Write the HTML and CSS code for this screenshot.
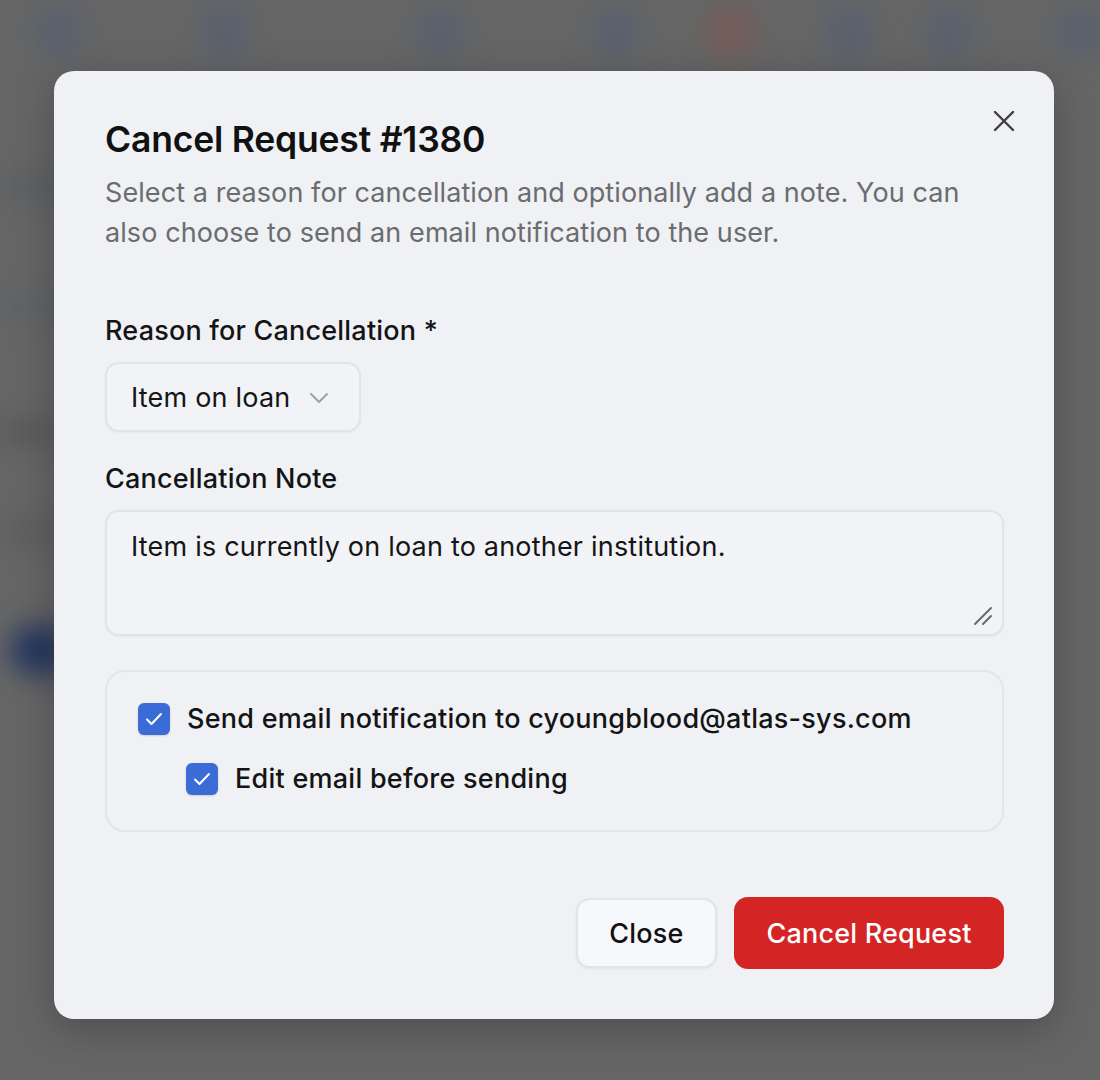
FILE: index.html
```html
<!DOCTYPE html>
<html lang="en">
<head>
<meta charset="utf-8">
<title>Cancel Request</title>
<link rel="stylesheet" href="styles.css">
</head>
<body>
<div class="backdrop" aria-hidden="true">
  <div class="blob b1"></div>
  <div class="blob b2"></div>
  <div class="blob b3"></div>
  <div class="blob b4"></div>
  <div class="blob b5 red"></div>
  <div class="blob b6"></div>
  <div class="blob b7"></div>
  <div class="blob b8"></div>
  <div class="blob navy"></div>
  <div class="line l1"></div>
  <div class="line l2"></div>
  <div class="line l3"></div>
  <div class="line l4"></div>
</div>
<div class="overlay">
  <div class="modal" role="dialog">
    <button class="close-x" aria-label="Close">
      <svg width="22" height="22" viewBox="0 0 22 22"><path d="M2 2 L20 20 M20 2 L2 20" stroke="#3f3f3f" stroke-width="2.4" stroke-linecap="round"/></svg>
    </button>
    <h1 class="title">Cancel Request #1380</h1>
    <p class="desc">Select a reason for cancellation and optionally add a note. You can also choose to send an email notification to the user.</p>

    <label class="label label-first">Reason for Cancellation *</label>
    <div class="select">
      <span>Item on loan</span>
      <svg class="chev" width="20" height="12" viewBox="0 0 20 12"><path d="M2 2 L10 10 L18 2" fill="none" stroke="#a0a0a0" stroke-width="2" stroke-linecap="round" stroke-linejoin="round"/></svg>
    </div>

    <label class="label label-second">Cancellation Note</label>
    <div class="textarea">
      <span>Item is currently on loan to another institution.</span>
      <svg class="resize" width="20" height="20" viewBox="0 0 20 20"><path d="M18 2 L2 18 M18 10 L10 18" stroke="#6a6a6a" stroke-width="2" stroke-linecap="round"/></svg>
    </div>

    <div class="panel">
      <div class="check-row">
        <span class="box"><svg width="18" height="14" viewBox="0 0 18 14"><path d="M2 7.5 L6.5 12 L16 2" fill="none" stroke="#fff" stroke-width="2" stroke-linecap="round" stroke-linejoin="round"/></svg></span>
        <span>Send email notification to cyoungblood@atlas-sys.com</span>
      </div>
      <div class="check-row sub">
        <span class="box"><svg width="18" height="14" viewBox="0 0 18 14"><path d="M2 7.5 L6.5 12 L16 2" fill="none" stroke="#fff" stroke-width="2" stroke-linecap="round" stroke-linejoin="round"/></svg></span>
        <span>Edit email before sending</span>
      </div>
    </div>

    <div class="actions">
      <button class="btn btn-secondary">Close</button>
      <button class="btn btn-danger">Cancel Request</button>
    </div>
  </div>
</div>
</body>
</html>
```
FILE: styles.css
```css
* { box-sizing: border-box; }
html, body { margin: 0; padding: 0; }
body {
  width: 1100px;
  height: 1080px;
  background: #666666;
  font-family: Inter, "Noto Sans", "Liberation Sans", sans-serif;
  overflow: hidden;
  position: relative;
}
.backdrop {
  position: absolute;
  inset: 0;
  filter: blur(14px);
  overflow: hidden;
}
.blob {
  position: absolute;
  top: 10px;
  width: 40px;
  height: 44px;
  border-radius: 10px;
  background: #566070;
}
.b1 { left: 38px; }
.b2 { left: 205px; }
.b3 { left: 420px; }
.b4 { left: 595px; }
.b5 { left: 710px; }
.b6 { left: 830px; }
.b7 { left: 930px; }
.b8 { left: 1060px; }
.red { background: #7a5a58; }
.navy {
  top: 625px;
  left: 10px;
  width: 60px;
  height: 50px;
  border-radius: 25px;
  background: #23355f;
}
.line {
  position: absolute;
  left: 0;
  width: 60px;
  height: 14px;
  background: #555a60;
}
.l1 { top: 180px; }
.l2 { top: 300px; background: #5a6068; }
.l3 { top: 425px; background: #505050; }
.l4 { top: 525px; background: #585858; }

.overlay {
  position: relative;
  display: flex;
  justify-content: center;
  padding: 71px 0 0 8px;
}
.modal {
  position: relative;
  width: 1000px;
  height: 948px;
  background: #eff1f4;
  border-radius: 20px;
  padding: 48px 50px 50px 51px;
  box-shadow: 0 10px 40px rgba(0,0,0,0.25);
  display: flex;
  flex-direction: column;
}
.close-x {
  position: absolute;
  right: 39px;
  top: 39px;
  width: 22px;
  height: 22px;
  padding: 0;
  border: 0;
  background: transparent;
  display: flex;
}
.title {
  margin: 0;
  font-size: 35.5px;
  line-height: 42px;
  font-weight: 600;
  color: #111111;
  letter-spacing: -0.2px;
}
.desc {
  margin: 12px 0 0;
  font-size: 27px;
  line-height: 40px;
  color: #6b6c6e;
  font-weight: 400;
  letter-spacing: 0.08px;
}
.label {
  display: block;
  font-size: 27px;
  line-height: 36px;
  color: #141414;
  font-weight: 500;
  letter-spacing: 0.2px;
}
.label-first { margin-top: 60px; }
.label-second { margin-top: 29px; }
.select {
  margin-top: 13px;
  width: 256px;
  height: 70px;
  border: 2px solid #e2e3e6;
  border-radius: 14px;
  background: #f1f3f6;
  display: flex;
  align-items: center;
  justify-content: space-between;
  padding: 0 30px 0 24px;
  font-size: 27px;
  letter-spacing: 0.2px;
  color: #151515;
  box-shadow: 0 1px 2px rgba(0,0,0,0.04);
}
.chev { margin-top: 2px; }
.textarea {
  position: relative;
  margin-top: 13px;
  height: 126px;
  border: 2px solid #e2e3e6;
  border-radius: 14px;
  background: #f1f3f6;
  padding: 17px 24px;
  font-size: 27px;
  letter-spacing: 0.2px;
  line-height: 36px;
  color: #151515;
  box-shadow: 0 1px 2px rgba(0,0,0,0.04);
}
.resize {
  position: absolute;
  right: 9px;
  bottom: 8px;
}
.panel {
  margin-top: 34px;
  height: 162px;
  border: 2px solid #e4e5e8;
  border-radius: 20px;
  padding: 31px 31px 0;
  display: flex;
  flex-direction: column;
  gap: 28px;
}
.check-row {
  display: flex;
  align-items: center;
  gap: 17px;
  font-size: 27px;
  letter-spacing: 0.25px;
  line-height: 32px;
  color: #141414;
  font-weight: 500;
}
.check-row.sub { padding-left: 48px; }
.box {
  width: 32px;
  height: 32px;
  border-radius: 6px;
  background: #3b6bd7;
  display: flex;
  align-items: center;
  justify-content: center;
  flex: none;
  box-shadow: 0 1px 2px rgba(0,0,0,0.15);
}
.actions {
  margin-top: 65px;
  display: flex;
  justify-content: flex-end;
  align-items: center;
  gap: 17px;
}
.btn {
  font-family: inherit;
  font-size: 27px;
  letter-spacing: 0.2px;
  border-radius: 14px;
  cursor: pointer;
}
.btn-secondary {
  width: 141px;
  height: 70px;
  background: #f6f8fb;
  border: 2px solid #e3e4e7;
  color: #111111;
  font-weight: 500;
  box-shadow: 0 1px 3px rgba(0,0,0,0.06);
}
.btn-danger {
  width: 270px;
  height: 72px;
  background: #d42525;
  border: 0;
  color: #ffffff;
  font-weight: 500;
}
```
